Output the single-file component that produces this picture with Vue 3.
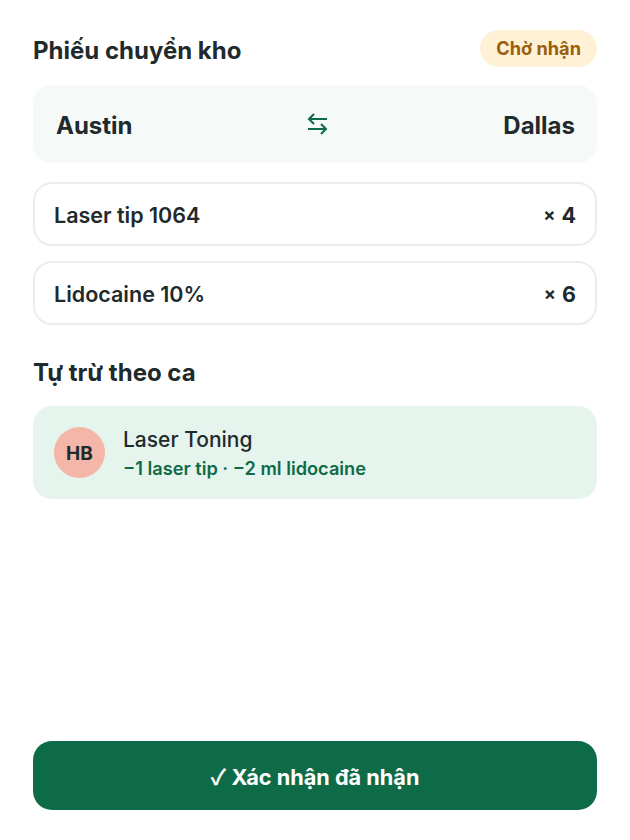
<script setup>
const items = [
  { name: 'Laser tip 1064', qty: '4' },
  { name: 'Lidocaine 10%', qty: '6' }
]
</script>

<template>
  <div class="page">
    <header class="head">
      <h1 class="title">Phiếu chuyển kho</h1>
      <span class="pill">Chờ nhận</span>
    </header>

    <section class="route">
      <span>Austin</span>
      <svg class="swap" width="22" height="22" viewBox="0 0 22 22" fill="none" stroke="currentColor" stroke-width="2">
        <path d="M20 6H2M7 1 2 6l5 5" />
        <path d="M1 16h18M14 11l5 5-5 5" />
      </svg>
      <span>Dallas</span>
    </section>

    <div class="list">
      <div v-for="item in items" :key="item.name" class="item">
        <span>{{ item.name }}</span>
        <span class="qty"><span class="times">×</span>{{ item.qty }}</span>
      </div>
    </div>

    <h2 class="sub">Tự trừ theo ca</h2>

    <section class="auto">
      <div class="avatar">HB</div>
      <div class="info">
        <div class="proc">Laser Toning</div>
        <div class="use">−1 laser tip · −2 ml lidocaine</div>
      </div>
    </section>

    <button class="confirm" type="button"><span class="check">✓</span> Xác nhận đã nhận</button>
  </div>
</template>

<style>
html, body { margin: 0; background: #fff; }
</style>

<style scoped>
.page {
  box-sizing: border-box;
  height: 840px;
  padding: 30px 33px;
  display: flex;
  flex-direction: column;
  font-family: Inter, "Noto Sans", sans-serif;
  color: #1f2a2c;
}
.head { display: flex; justify-content: space-between; align-items: center; height: 37px; }
.title { margin: 0; padding-top: 3px; font-size: 24px; font-weight: 700; }
.pill {
  height: 37px; line-height: 37px; padding: 0 16px; border-radius: 19px;
  background: #fff1d6; color: #9a5f0c; font-size: 18.2px; font-weight: 700;
}
.route {
  margin-top: 18px; box-sizing: border-box; height: 78px; padding: 3px 22px 0 23px; border-radius: 19px;
  background: #f5f9f8; display: flex; justify-content: space-between; align-items: center;
  font-size: 24px; font-weight: 700;
}
.swap { color: #0e6b47; margin-top: -3px; }
.list { margin-top: 19px; display: flex; flex-direction: column; gap: 15.5px; }
.item {
  box-sizing: border-box; height: 63.5px; padding: 2px 19px 0; border: 2px solid #e9eded; border-radius: 19px;
  display: flex; justify-content: space-between; align-items: center;
  font-size: 21.5px; font-weight: 600;
}
.qty { display: flex; align-items: center; gap: 6px; font-weight: 700; }
.times { font-size: 18px; }
.sub { margin: 33px 0 0; font-size: 24px; line-height: 30px; font-weight: 700; }
.auto {
  margin-top: 18px; height: 93px; padding: 0 21px; border-radius: 19px;
  background: #e5f4ed; display: flex; align-items: center; gap: 18px;
}
.avatar {
  box-sizing: border-box; width: 51px; height: 51px; padding-top: 3px; border-radius: 50%; background: #f4b6a8;
  display: flex; align-items: center; justify-content: center;
  font-size: 19px; font-weight: 700;
}
.info { padding-top: 3px; }
.proc { font-size: 21px; font-weight: 500; line-height: 29px; }
.use { font-size: 18.2px; font-weight: 600; color: #0e6b47; line-height: 29px; }
.confirm {
  margin-top: auto; height: 69px; padding: 0 0 0; border: 0; border-radius: 19px;
  background: #0e6b47; color: #fff; font: inherit; font-size: 21.7px; font-weight: 700;
}
.check { font-family: "Noto Sans CJK JP", sans-serif; }
</style>
